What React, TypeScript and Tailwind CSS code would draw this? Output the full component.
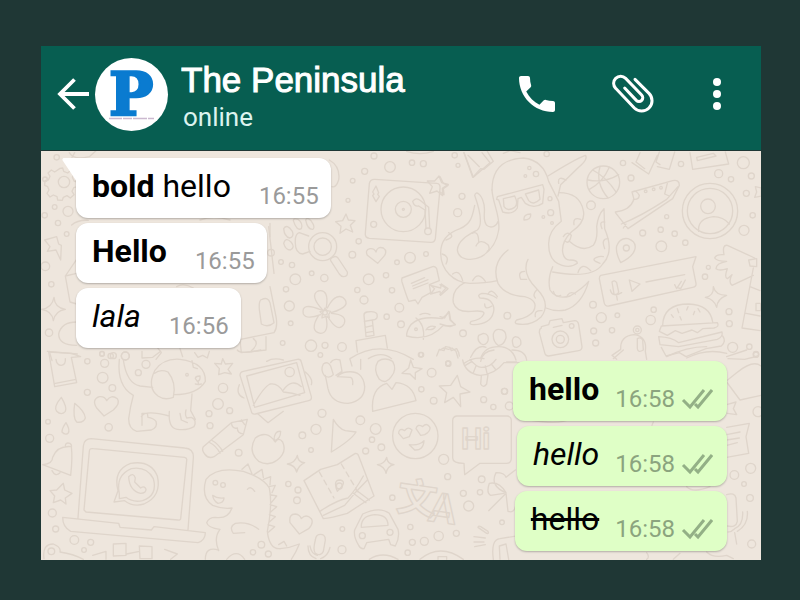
import { clsx } from 'clsx'

type Message = {
  text: string
  strong?: string
  time: string
  sent?: boolean
  tail?: boolean
  style?: string
}

const received: Message[] = [
  { strong: 'bold', text: ' hello', time: '16:55', tail: true },
  { text: 'Hello', time: '16:55', style: 'font-bold' },
  { text: 'lala', time: '16:56', style: 'italic' },
]

const sent: Message[] = [
  { text: 'hello', time: '16:58', sent: true, style: 'font-bold' },
  { text: 'hello', time: '16:58', sent: true, style: 'italic' },
  { text: 'hello', time: '16:58', sent: true, style: 'line-through' },
]

// Each wallpaper tile has its own origin, a list of outlines and a list of [x, y, r] bubbles
type Tile = { x: number; y: number; paths: string[]; dots: number[][] }

const tiles: Tile[] = [
  {
    x: -3,
    y: -3,
    paths: [
      // gear
      'M60 55l8-1 3 10 12 5 10-8 10 10-6 10 5 12 10 3v14l-11 3-5 11 6 10-11 10-10-7-11 5-3 9-14-1-2-10-11-5-10 6-9-11 6-10-4-10-9-4 1-14 10-2 5-11-6-10 10-9 10 6z',
      // lightning, bag, sparkle
      'M14 270l36-10 6 22 8 4-2 44-14-30-26 4 8-14z',
      'M110 328l-34 50 14 78 20 6M76 378l34-8',
      'M42 442q2 32 34 36q-30 4-36 34q-4-30-36-34q32-4 38-36z',
      'M110 516q-46 0-54 36q0 34 54 34M22 604l90 8 M28 604l8 28',
      'M95 225q18-16 50-14M88 8q12 24 60 12l20-18M104 8l-8 14',
      // shirt behind the lower bubbles
      'M686 230l16 140M690 410l18 90q6 32-6 48l-100 20M666 448q-10 0-8 30l6 44q20 12 38-4l-12-60q-6-18-24-10zM600 570l4 38 74-8v-40M640 566q20 14-6 36',
      'M350 590l14 18-16 20M420 596l8 24',
      'M410 410q20-12 50 4M480 210q40-14 90 0',
    ],
    dots: [[72, 96, 17], [14, 196, 8], [44, 171, 7], [84, 184, 15], [54, 219, 8], [80, 252, 7], [16, 349, 13], [34, 403, 8], [27, 548, 11], [15, 88, 7], [50, 22, 8], [186, 611, 7], [212, 618, 8], [256, 618, 12]],
  },
  {
    x: 597,
    y: -3,
    paths: [
      // turntable
      'M405 88l185 12q12 1 10 16l-14 150q-2 12-14 11l-184-12q-14-2-12-16l12-148q2-14 17-13z',
      'M518 154q10-14 24-2l24 20 3 62M518 154q4 16 18 14l19 12 3 54M408 108l8 20-3 5 5 6-10 16-10-18 4-5-4-6z',
      'M597 78l8 20 20 5-18 12 1 22-17-14-22 7 8-20-15-17h22z',
      'M318 192l7 18 20 2-14 14 7 20-20-9-18 13 3-21-16-14 21-3z',
      // magnifier
      'M206 258l-28-10q-14 4-12 32q0 30 22 32l22-8M278 322q10-6 16 2l28 42q2 14-12 14q-6 0-12-8l-26-40q-2-8 6-10z',
      // heart
      'M413 340l-31-24q-8-16 8-20q13-2 18 10q4-18 22-12q12 8 4 22z',
      // flower
      'M248 480q-40-44-14-57q34-8 25 50M262 474q22-44 46-32q32 26-34 46M274 490q50 4 38 32q-18 30-50-24M258 500q10 48-16 50q-36-6-6-54M242 494q-42 16-52-2q-8-38 54-12',
      'M255 474l6 8 11 2-6 9 2 10-12-3-10 4 1-11-7-8 11-3z',
      // hat and candy
      'M352 606l-4-34 88-16 6 38M372 496l6 64 24-4-5-46q18 0 14-18q-6-10-30-6q-10 2-9 10zM373 514l24-4M375 532l22-5M378 548l22-4M330 626q90-60 190 2M385 626q40-24 70 0',
      // chat card
      'M486 384l92-34q8-2 12 6l8 36-30 12 4 24-26 14-12 20-8-12-20 4q-8-20-20-58-2-8 0-12zM514 400l40-17M518 408l46-19M520 416l44-17M572 406l30 8 2-12 20 14-22 20-2-12-28 8 12-16z',
      // fish
      'M500 552q12-60 106-46l22-20 4 24 14 14q-20 6-36 2q-44 50-110 32zM528 504q28 20 22 64M540 494q16-8 30 0M558 540q10-16 28-10q-6 12-24 8',
      // gear at the bottom, shirt at the top
      'M590 618l8-20 14 4 4-12 14 2 4 10 16-6 6 12 2 10M268 30q34 20 28 60-8 24-20 20M672 8l28 74 50-44-24-30M500 4q40 14 80 0',
      'M160 212q0-8 14-4q16 12 10 28q-14 8-24-24zM197 210q4-10 16 2q14 20 6 26q-16 2-22-28zM131 236q10-16 26 8q6 16-8 20q-16-4-18-28zM131 280q6-20 22-4q14 16-2 24q-14 0-20-20zM90 220v40',
    ],
    dots: [[450, 51, 16], [402, 18, 9], [374, 64, 9], [338, 92, 7], [324, 151, 6], [516, 38, 8], [550, 41, 9], [490, 178, 67], [490, 178, 24], [490, 178, 3], [401, 223, 9], [564, 244, 10], [248, 290, 42], [248, 290, 26], [356, 274, 8], [337, 314, 10], [510, 323, 16], [558, 312, 7], [471, 337, 7], [386, 388, 16], [438, 376, 8], [456, 421, 8], [352, 420, 8], [372, 450, 12], [478, 473, 13], [440, 500, 8], [483, 523, 10], [166, 388, 16], [215, 370, 7], [253, 384, 11], [138, 418, 8], [148, 468, 15], [152, 520, 7], [93, 308, 10], [123, 336, 7], [156, 345, 8], [128, 579, 7], [213, 587, 17], [255, 586, 9], [306, 591, 13], [544, 614, 7], [255, 488, 7], [528, 538, 4]],
  },
  {
    x: 1197,
    y: -3,
    paths: [
      // octopus: head and right arm
      'M156 120q0-92 94-96q60 6 76 70l30 60 8 60q-40 30-38 70q0 50 40 62q28 8 46-6q0-10-20-10-20 2-24-24q-4-30 26-60 44-30 36-64-10-54-74-54',
      'M324 78q80-50 112-62q10 10-20 36l-54 52-8 34',
      // left arm
      'M156 120C158 160 182 200 176 240C170 280 150 304 124 320C92 336 54 328 52 300C54 268 90 252 112 240C132 222 116 170 104 136C108 120 124 134 130 156C140 180 124 206 140 226C152 236 170 230 174 214',
      'M104 166C98 196 94 222 60 236C26 248 2 270 2 308C2 360 40 398 90 400Q136 400 172 392',
      // lower arms
      'M204 300q-52 40-30 100 20 36 80 40 44 12 26 44-10 16-50 26-10 10 4 12 40 6 70-22 30-40-14-84-34-34-32-64 0-14 6-24M74 398q-40 20-34 60 10 30 54 26 46-4 36 10-6 14-36 20-10 10 8 10 50-2 58-36 6-20-10-36-10-8-30-8-10-10 6-14 24 0 44 14',
      'M388 274q40 36 72 12 14-20 10-56 4-36 22-54l2 60q30 70-6 106-30 46-150 24M338 350q-16 36-8 70 20 30 60 18 40-24 56-44-20 70-70 86-30 6-58-6',
      'M18 270q30-10 8-22M6 312q24 6 12 30M38 372q20-16 30 20M98 392q16-30 38 2M96 250q20-10 20 26M108 288q12-24 36-4 8 14-2 20M356 100q-4-24 22-10M402 224q-4-24 20-16M370 260q10-18 24-4-6 28-18 18M486 236q-10-24 8-20M494 296q-12-30 10-30M480 340q-30-10-10-18 10-4 20-2M414 368q10-34 38-6M340 424q6 20 22 12M382 436q10-14 24-4M254 364q-22 0-12 24h18M290 420q-14 14-4 24M286 500q-4-20 20-18M144 432q10-20 28 8M134 462q0 20 22 6',
      // glasses
      'M172 140l136-36 4 14-4 42q-26 18-52 0l-12-18-10 4-2 28q-14 22-44 12l-12-36-6-2zM190 146l34-8q12 24 0 34-22 14-32-2zM256 132l40-12 4 28q-20 20-34 4zM252 210q-2-18 20-18 2 18-20 18z',
      // basketball
      'M444 90q50 10 92-16M458 60q40 20 70 66M448 118q40-20 60-66M480 50q-14 50 24 94',
      // sneaker
      'M526 186q44-4 56-38l-6-22 122-34q20-4 20 14l-20 40-134 90-36-46zM544 222q60-24 136-74l34-38M576 126q12-8 22 10-2 14-18 12M682 100l-8 32 14 6M550 234l8-12',
      // pin, voice message card
      'M542 338q-16-30-12-50 10-26 34-22 28 10 20 34-6 20-42 38z',
      'M482 376l286-56-10 30 10 50q2 10-10 12l-252 56q-12 2-14-12l-14-70q0-8 4-10zM516 396q8-8 14 2l6 28q-4 10-14 6zM511 420q6 24 34 8M530 438l2 12M568 390l32 12-24 22zM618 396l116-22M704 404l6 12 14-22M716 414l6 2 14-26',
      // top edge
      'M72 8l26 74 24-26 10 2 28-24-18-30M84 16l34 34M576 38l50 34 26-56M600 8l-12 28 26 20M652 50l36 8 16-52M660 44l-12-8 10-30M750 8l8 50 108-16-10-36M770 22l50-12 8 8-56 14z',
      'M776 244q-4-38 44-44 30 0 48 22M190 10l20-8 30 6',
      // splash, bottle
      'M944 324l-82-38q-16-2-10 28-24-2-28 10 6 10 36 10-32 6-32 22 10 8 34 0-10 26 0 30l14-12q-12 22 0 32l64-30M926 330l24-4v24l-20-2zM940 354l-34 180 54 8M930 410l30 12M918 490l42 8M948 460h14v22h-14z',
      'M820 410q6 26 40 26-28 10-30 36-6-24-34-30 26-4 24-32z',
      'M946 110l18 4v24l-20 4 6-16z',
      // burger
      'M668 526q2-64 78-64 64 2 72 54M664 528l168-10q8 12-10 16l-34 2-16 12-16-8-30 10-20-8-24 14-24-12zM656 560q40 2 60 18l130-32q4 14-14 22l-116 22-56-6zM664 592l14 26 40-10 20 12 60-24 46-8q16-14 4-30M694 494l6 8M716 488l-4-12M740 480l4-10M760 494l4-10M780 486l-6-10M724 510l-4-10',
      // camera
      'M304 530l22-6 4-12 36-6 4 12 34-6q10 0 12 12l10 66q0 10-10 12l-90 16q-10 0-12-10l-16-60q0-12 6-14zM340 532l26-6',
      // bell
      'M516 616l26-18q-2-40 40-44 40 4 34 50l4 24M516 616l14 12M592 566q10-6 16 4l2 30q-16 10-18-4z',
      // people
      'M92 622q20-42 46-30M122 626q10-36 54-36 40 0 52 40M216 600q40 0 44 30M72 640q30-20 60-14M200 636h30M130 550q18 2 14 22-6 16-20 10-14-10-8-26zM176 538q24 0 22 26-8 24-24 22-16-12-14-34 4-14 16-14zM226 560q20 2 16 24-12 14-22 4-8-24 6-28z',
      'M0 80l10 20 14 6-14 10 2 18-12-8M0 500l14 4 12-20 4 26 16 14-16 6-30-8M0 404l18 10-18 20M0 600l10-6 16 4 10-4 12 10 6 20M864 626l50 2 40-10',
    ],
    dots: [[44, 16, 8], [54, 46, 6], [66, 139, 9], [53, 188, 12], [288, 72, 8], [330, 146, 6], [332, 188, 9], [336, 219, 4], [310, 201, 4], [256, 78, 4], [268, 54, 5], [320, 12, 8], [490, 97, 49], [549, 39, 8], [573, 84, 9], [453, 166, 13], [723, 42, 8], [836, 71, 12], [873, 88, 8], [910, 38, 18], [934, 78, 9], [919, 130, 9], [938, 196, 8], [912, 241, 15], [810, 183, 83], [810, 183, 68], [804, 169, 22], [608, 249, 9], [662, 239, 8], [704, 251, 8], [680, 200, 6], [736, 278, 8], [664, 289, 16], [559, 294, 9], [805, 352, 6], [795, 380, 8], [484, 503, 15], [459, 464, 10], [532, 496, 7], [461, 543, 9], [467, 579, 9], [516, 541, 8], [202, 497, 10], [632, 510, 14], [641, 479, 8], [867, 485, 9], [868, 521, 9], [878, 592, 15], [928, 590, 8], [948, 612, 8], [69, 550, 10], [361, 568, 25], [361, 568, 12], [395, 528, 7], [592, 540, 12], [592, 540, 5], [617, 124, 4], [641, 118, 4], [663, 113, 4], [24, 640, 7]],
  },
  {
    x: -3,
    y: 597,
    paths: [
      'M26 6l18 104 66-12-16-76 28-2-28-10zM48 28q2 18 16 18 14-2 12-20M46 100l62-12M306 4v20l32-2 24-18',
      'M64 142q18 30 12 42-12 14-26 0-10-14 14-42zM104 160q30 24 32 44-6 16-26 12-12-12-6-56zM78 218q14 24 6 32-10 6-18-4 0-12 12-28z',
      'M192 198l-22-24q-16-26 8-34 16-2 22 12 14-20 32-6 10 14-12 34z',
      // dog
      'M238 28q-8 80 42 108-10 36-14 70 0 30 24 38l44-4q20-8 14-26-8-10-24-12l-2-12h-16v36M250 30q10 70 50 78l38 4M402 134q70 0 94-40 2-56-76-66-50-4-76 34-24 50 10 76 20 14 46 4 10-44-16-76-24-10-40 4M304 200q10-22 84-2M388 184q-4 50 24 54 30 4 50-8 10-20-8-28l-14 2q-6-10-2-24M420 190l4 20 18 8M456 132l-4 50 14 26M466 86q0-8 14-8 2 14-8 16zM474 94l2 10-10-2M476 104l8-2M456 32l4 20 12 4',
      'M548 26l8 16 22-2-14 18 10 14-20-4-18 6 2-18-14-16 20 2z',
      // pencil
      'M490 290l84-72 48-10-12 46-88 66q-16 8-28-8-10-12-4-22zM574 218q2 20 18 16 0 16 18 18M506 276q24 12 34 34M514 270q22 12 34 34M604 210l10 14',
      // laptop
      'M114 504l16-216q2-22 24-22l280 28q28 2 26 30l-16 216M132 480l16-176q0-10 12-8l274 26q8 2 6 10l-18 174q-2 6-8 4l-276-24zM68 502l168 18 4 12 94 8 8-10 154 18q0 22-22 30L92 544q-24-12-24-42z',
      'M222 456l12-34q-16-62 38-82 60-10 80 38 14 60-40 84-32 10-58-10zM238 432q-12-56 36-76 46-8 66 30 14 50-32 66-30 6-50-10l-20 4zM266 380q14-14 20 4l-2 12 18 18q12-8 16 4 0 12-16 12-34-8-36-50z',
      // bell, star
      'M8 344q30-2 30-22 14-36 56-32 4 34-2 86zM76 288q0-12 14-8 6 4 4 12M36 362q10 20 24 6M70 400l4 20 22 10-20 14 2 18-16-12-22 8 4-20-14-16 20-2z',
      // dinosaur
      'M610 364q-80-16-112 24-16 54 20 78 30 12 58 8-12 34-50 28-20 0-26 16 4 16 40 20-20 26-4 64M610 364q60 20 78 50 10 50-6 130 6 54 38 52M606 358l18-16 12 30M642 374l24-16 4 24M670 388l22-8-2 24M686 410l20-4-10 22M690 434l20 4-16 20M690 464l20 6-18 16M688 494l18 6-18 16M684 524l20 6-18 16M518 436q12 10 34 8 0 14-18 16-14-8-16-24zM622 418q10-12 22 6M656 538q-30-24-70-18-20 10-6 30l34-2M496 628q0-40 40-28M560 628q30-34 54 0',
      // bottom strip
      'M12 626q-6-44 28-44 24 10 20 24 40 6 70 22M158 616l40-12v24M220 582l38-2v36l-38 2zM298 588l38 2v36h-36zM260 612l38-8M374 598l38 14-20 16M464 8l10 14 14-6 14 8 6-20M592 0q10 14 70 0',
    ],
    dots: [[186, 12, 7], [220, 17, 9], [142, 34, 8], [194, 40, 12], [188, 83, 16], [217, 114, 10], [142, 127, 9], [206, 232, 11], [24, 215, 7], [29, 265, 12], [318, 43, 12], [295, 68, 9], [256, 18, 12], [441, 74, 4], [549, 114, 14], [534, 162, 16], [507, 191, 9], [569, 182, 9], [510, 227, 9], [596, 308, 10], [37, 489, 12], [47, 537, 9], [103, 570, 13], [152, 577, 9], [132, 600, 7], [34, 604, 10], [526, 398, 7], [549, 405, 7]],
  },
  {
    x: 597,
    y: 597,
    paths: [
      // photo
      'M0 76q0-10 10-12l162-36q10-2 12 8l30 104q2 10-8 12L46 192q-10 2-12-8zM20 78l150-40 24 90-150 44zM40 166q30-54 50-64 24-4 40 24 28 2 50 10M130 120q26-36 54-10M54 192l30 26 46-34M196 66q24 20 18 38M80 34q20-12 50-4M-2 104q-12 30 14 40',
      // fist
      'M256 76l8 40q10 44 60 44 50-8 50-50-4-50-54-44-18 2-28 14l40 2q8 4 6 22M250 42q14-10 22 6l8 26q-10 12-26 4-14-18-4-36zM272 38q8-14 28-8l6 34-18 12M362 28v30M330 28l6 20',
      // person
      'M414 34q20-14 44 0 14 24-4 46-16 24-36 8-20-30-4-54zM398 184q-6-70 42-84l16 18 12-20q50 4 60 54zM512 30l8 22 26 4-20 12v20l-16-16-24-2 20-16z',
      // starfish, wheel
      'M652 76l10 34 28 16-30 6 2 38-22-28-26 16 6-30-22-20 34-2zM668 30q8 40 52 46 44-2 72-38h48M690 28q20 24 34 24 28 0 44-24M722 34q4-30 40-34M676 46l20-12M700 68l8-20M742 74l-6-26M768 60l-14-18M724 78l-2 24q8 14 18 0l4-28',
      // play arrow, apple
      'M280 208q16 28 36 34l32 4q-14 24-74 60zM106 276q-26-38-60-12-24 40 10 70 30 16 56-4 30-24 16-54-12-16-22 0zM102 272q0-30 20-28 0 24-20 28z',
      'M172 316q2 22 22 22-18 8-24 28-4-20-28-24 24-4 30-26zM440 322q2 20 22 22-20 4-24 26-4-20-26-26 22-2 28-22z',
      // smiley
      'M490 266l-14-16q0-12 10-12l8 4q10-14 22-2l-8 20zM542 256l-14-20q4-16 20-6 12-14 22 2 2 12-16 22zM508 284q30 4 44-12-2 30-28 28z',
      // speech bubble
      'M650 198h152q12 2 12 14v112q0 16-14 16h-80l-46 34-2-34q-34 0-34-16V212q0-12 12-14z',
      // map
      'M192 392l50-34 50-14 54-34q8 0 10 8l46 120-80 52q-50 14-72 16zM240 484q50-34 84-40 20-20 46-66M250 496l64-30 30-36 38-40M348 420l40 30M340 430l38 28M292 424q-14-34 8-34 24 4-8 34z',
      // car
      'M344 540l24-48q50-24 80-2l26 48q6 24-8 50l-14-4-6-16-66 10-8 18q-10 2-16-10-16-26-12-46zM364 532q-2-34 40-38 40 0 40 32z',
      // clover
      'M798 428q-50-20-30-60 26 0 30 14M798 428q-20-34-50-28-10 30 4 36l40-6M796 432l-50 50M798 430l6 54q18 6 22-14M800 380l26-20M740 550l-26-18q2-6 8-2l22 14q4 8-4 6M702 560l34 4M702 576h30M704 590l32-6M760 628q-8-60 20-62l60-10M780 628l-2-40 20-6 8 46',
      // heart, mic
      'M178 552l-28-34q-4-26 16-26 14 2 18 14 14-16 30 0 8 14-8 30zM236 554q20-4 20 16l-6 34q-8 16-24 6-8-10 0-40 2-14 10-16zM204 588q0 30 24 38M270 592q-6 26-28 34M210 588q4 24 22 28M388 628q40-26 86 0M540 628q60-50 130 0M594 628v-8h26v8',
      // dinosaur tail
      'M120 596q30-2 58-14-10 26-24 46M116 584l16-10 8 14',
    ],
    dots: [[241, 15, 7], [149, 66, 14], [246, 190, 12], [228, 238, 15], [187, 256, 10], [213, 300, 7], [361, 211, 13], [407, 237, 16], [396, 269, 8], [424, 292, 10], [377, 303, 9], [526, 258, 68], [575, 68, 13], [544, 118, 8], [581, 152, 10], [625, 41, 8], [542, 14, 7], [793, 124, 9], [731, 149, 9], [760, 171, 8], [808, 168, 12], [611, 328, 15], [623, 380, 9], [725, 388, 10], [720, 427, 8], [670, 430, 9], [686, 468, 15], [786, 517, 7], [596, 558, 14], [553, 574, 12], [517, 577, 9], [511, 531, 8], [649, 550, 9], [457, 443, 8], [145, 402, 8], [174, 420, 9], [171, 451, 10], [307, 537, 7], [306, 599, 12], [64, 584, 10], [39, 607, 8], [85, 612, 9], [367, 557, 9], [450, 547, 9], [503, 608, 8], [298, 408, 9]],
  },
  {
    x: 1377,
    y: 597,
    paths: [
      'M680 92l30-24q50-40 73-20M680 96l40 54 63-14M680 164l28-8-8 20 10 18-28-4M680 232l68-12-10 40 8 50-66 12M680 254l40-8M680 270l38-6M680 286l32-8M680 434q24-8 28 10l4 70q-4 20-30 14M742 484q4 40-30 60M728 486q2 40-24 50-10 10-20 10M704 548l6 34',
      'M340 26l30-26M500 20q60-30 120-30M560 24q60-30 120-14M680 20l60-20M90 210q90 16 120-4M460 216l-4 10M560 410q20 20 70 0M440 608q10 14 0 20M540 610l-20 18M620 606q20 20 60 10l20 10',
    ],
    dots: [[774, 185, 15], [752, 355, 15], [703, 375, 13], [732, 402, 7], [750, 444, 10], [755, 582, 12], [768, 14, 8], [14, 124, 9]],
  },
]

function Wallpaper() {
  return (
    <svg
      className="absolute inset-0 h-full w-full"
      viewBox="0 0 2160 1227"
      preserveAspectRatio="xMinYMin slice"
      fill="none"
      stroke="#dfd5cb"
      strokeWidth="4"
      strokeLinecap="round"
      strokeLinejoin="round"
      aria-hidden="true"
    >
      {tiles.map((tile, i) => (
        <g key={i} transform={`translate(${tile.x} ${tile.y})`}>
          {tile.paths.map((d) => (
            <path key={d} d={d} />
          ))}
          {tile.dots.map(([cx, cy, r], j) => (
            <circle key={j} cx={cx} cy={cy} r={r} />
          ))}
        </g>
      ))}
      <path d="M835 963l44 78M901 939l50 84" strokeDasharray="16 12" />
      <g fontFamily="Roboto, 'Noto Sans CJK SC', sans-serif" fontWeight="700">
        <text x="1260" y="893" fontSize="90">Hi</text>
        <text x="1068" y="1084" fontSize="120" transform="rotate(8 1120 1040)">文</text>
        <text x="1163" y="1116" fontSize="124" transform="rotate(8 1210 1080)">A</text>
      </g>
    </svg>
  )
}

function Avatar() {
  return (
    <div className="ml-1.5 size-[73px] shrink-0 overflow-hidden rounded-full bg-white">
      <svg viewBox="0 0 73 73" className="size-full">
        <text
          x="14"
          y="57"
          fontFamily="'DejaVu Serif', serif"
          fontWeight="700"
          fontSize="59"
          fill="#0a7bd0"
          stroke="#0a7bd0"
          strokeWidth="2.500"
        >
          P
        </text>
        <path d="M14 60.500h45" stroke="#cbb9cf" strokeWidth="1.500" strokeDasharray="13 1 9 1 14 1" />
      </svg>
    </div>
  )
}

function Header() {
  return (
    <header className="flex h-[105px] items-center border-b border-[#1f3735] bg-[#075e51] pr-8 pb-2 pl-4 text-white">
      <button type="button" aria-label="Back" className="shrink-0">
        <svg viewBox="0 0 32 32" className="size-8" fill="none" stroke="currentColor" strokeWidth="3.800">
          <path d="M17.500 1.500 3 16l14.500 14.500M3 16h29" />
        </svg>
      </button>
      <Avatar />
      <div className="ml-[13px] min-w-0 flex-1 pt-1">
        <h1 className="truncate font-['Liberation_Sans',sans-serif] text-[35px] leading-10 [-webkit-text-stroke:1px_white]">
          The Peninsula
        </h1>
        <p className="mt-px ml-0.5 text-[26px] leading-8 text-[#dcf3ee]">online</p>
      </div>
      <div className="flex shrink-0 items-center gap-12">
        <button type="button" aria-label="Call">
          <svg viewBox="0 0 24 24" className="size-12" fill="currentColor">
            <path d="M6.620 10.790c1.440 2.830 3.760 5.140 6.590 6.590l2.200-2.200c.27-.27.67-.36 1.020-.24 1.120.37 2.330.57 3.570.57.55 0 1 .45 1 1V20c0 .55-.45 1-1 1-9.390 0-17-7.610-17-17 0-.55.45-1 1-1h3.500c.55 0 1 .45 1 1 0 1.250.2 2.450.57 3.570.11.35.03.74-.25 1.020l-2.200 2.200z" />
          </svg>
        </button>
        <button type="button" aria-label="Attach">
          <svg viewBox="0 0 144 144" className="size-12" fill="none" stroke="currentColor" strokeWidth="9" strokeLinecap="round">
            <path d="M78 28 120 70A31 31 0 0 1 76 114L20 55A21 21 0 0 1 50 25L98 75A11 11 0 0 1 82 91L47 54" />
          </svg>
        </button>
        <button type="button" aria-label="More options">
          <svg viewBox="0 0 24 48" className="h-12 w-6" fill="currentColor">
            <circle cx="12" cy="12" r="4" />
            <circle cx="12" cy="24" r="4" />
            <circle cx="12" cy="36" r="4" />
          </svg>
        </button>
      </div>
    </header>
  )
}

function Ticks() {
  return (
    <svg viewBox="0 0 32 28" className="ml-1.5 h-7 w-8" fill="none" stroke="#93b086" strokeWidth="3">
      <path d="M2 15l7 7L23 5M14 19l3 3L31 5" />
    </svg>
  )
}

function Bubble({ message }: { message: Message }) {
  const { text, strong, time, sent, tail, style } = message
  return (
    <li
      className={clsx(
        'relative flex items-end rounded-xl pb-1 pl-4 shadow-[0_1px_2px_rgba(0,0,0,0.25)]',
        sent ? 'gap-4 bg-[#dfffc6] pr-3.5' : 'gap-7 bg-white pr-3',
        tail && 'rounded-tl-none',
      )}
    >
      {tail && (
        <svg viewBox="0 0 15 24" className="absolute top-0 -left-3.5 h-6 w-[15px]" fill="white" aria-hidden="true">
          <path d="M15 0H1.500Q-.5 1 1 3L15 24z" />
        </svg>
      )}
      <p className={clsx('text-[32px] leading-14 whitespace-pre text-black', style)}>
        {strong && <strong className="font-bold">{strong}</strong>}
        {text}
      </p>
      <span className={clsx('flex items-center pb-1 text-2xl leading-7', sent ? 'text-[#8ba47e]' : 'text-[#9a9a9a]')}>
        <time>{time}</time>
        {sent && <Ticks />}
      </span>
    </li>
  )
}

export default function App() {
  return (
    <main className="flex min-h-screen flex-col bg-[#1f3735] pt-[46px] pr-[39px] pb-10 pl-[41px] font-[Roboto,sans-serif]">
      <Header />
      <section className="relative flex-1 overflow-hidden bg-[#eee6dd]">
        <Wallpaper />
        <div className="relative flex flex-col gap-[13px] pt-[7px] pr-[34px] pb-2 pl-[35px]">
          <ul className="flex flex-col items-start gap-[5px]">
            {received.map((message, i) => (
              <Bubble key={i} message={message} />
            ))}
          </ul>
          <ul className="flex flex-col items-end gap-[5px]">
            {sent.map((message, i) => (
              <Bubble key={i} message={message} />
            ))}
          </ul>
        </div>
      </section>
    </main>
  )
}
